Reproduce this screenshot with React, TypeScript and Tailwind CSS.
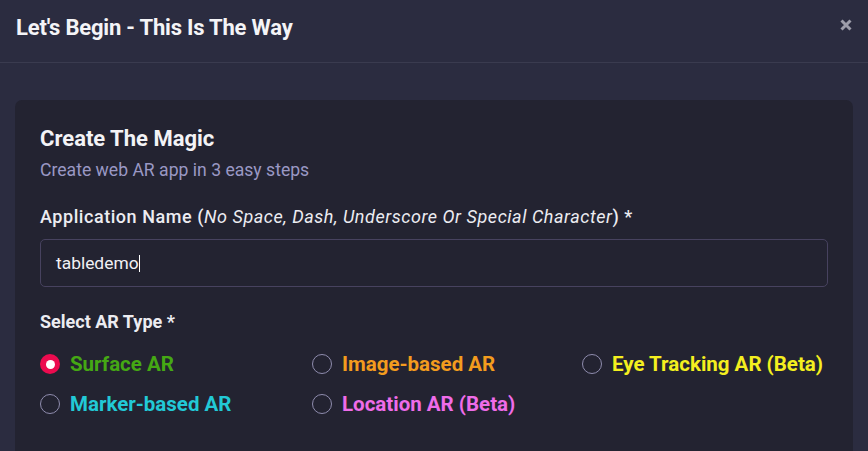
import React from "react";

const options = [
  { label: "Surface AR", color: "text-[#45a814]", checked: true },
  { label: "Image-based AR", color: "text-[#f39c1e]" },
  { label: "Eye Tracking AR (Beta)", color: "text-[#f4ef1f]" },
  { label: "Marker-based AR", color: "text-[#22c9d6]" },
  { label: "Location AR (Beta)", color: "text-[#ef6ce9]" },
];

export default function App() {
  return (
    <div
      className="w-[868px] h-[451px] overflow-hidden bg-[#2b2c40] text-white"
      style={{ fontFamily: "Roboto, 'Liberation Sans', sans-serif" }}
    >
      <div className="h-[63px] border-b border-[#3a3b4f] flex items-start justify-between pl-[16px] pr-[16px]">
        <h1 className="mt-[14px] text-[22px] leading-[28px] font-bold tracking-[-0.2px] text-[#f4f4f7]">
          Let's Begin - This Is The Way
        </h1>
        <svg className="mt-[19px]" width="12" height="12" viewBox="0 0 12 12">
          <path d="M1.5 1.5 L10.5 10.5 M10.5 1.5 L1.5 10.5" stroke="#9d9daa" strokeWidth="3" strokeLinecap="butt" />
        </svg>
      </div>
      <div className="px-[15px] pt-[37px]">
        <div className="bg-[#232331] rounded-[7px] h-[400px] pt-[25px] px-[25px]">
          <h2 className="text-[22px] font-bold text-[#f3f3f6] leading-[28px]">Create The Magic</h2>
          <p className="text-[17.6px] text-[#9a98c4] leading-[24px] mt-[5px]">Create web AR app in 3 easy steps</p>
          <label className="block mt-[23px] text-[18px] font-medium tracking-[0.55px] text-[#ececf1] leading-[24px]">
            Application Name (<i className="font-normal">No Space, Dash, Underscore Or Special Character</i>) *
          </label>
          <div className="mt-[10px] h-[48px] border border-[#47425f] rounded-[5px] flex items-center px-[15px]">
            <span className="text-[17.4px] text-[#f1f1f5]">tabledemo</span>
            <span className="w-[1.5px] h-[17px] bg-white"></span>
          </div>
          <div className="mt-[23px] text-[18px] font-bold text-[#ececf1] leading-[24px]">Select AR Type *</div>
          <div className="mt-[20px] grid grid-cols-[272px_270px_1fr] gap-y-[20px]">
            {options.map((o) => (
              <div key={o.label} className="flex items-center h-[20px]">
                {o.checked ? (
                  <span className="shrink-0 w-[20px] h-[20px] rounded-full bg-[#ec0b4f] flex items-center justify-center">
                    <span className="w-[9px] h-[9px] rounded-full bg-white"></span>
                  </span>
                ) : (
                  <span className="shrink-0 w-[20px] h-[20px] rounded-full border-[1.5px] border-[#8f8cae]"></span>
                )}
                <span className={`ml-[10px] text-[20.5px] leading-[24px] font-bold ${o.color}`}>{o.label}</span>
              </div>
            ))}
          </div>
        </div>
      </div>
    </div>
  );
}
